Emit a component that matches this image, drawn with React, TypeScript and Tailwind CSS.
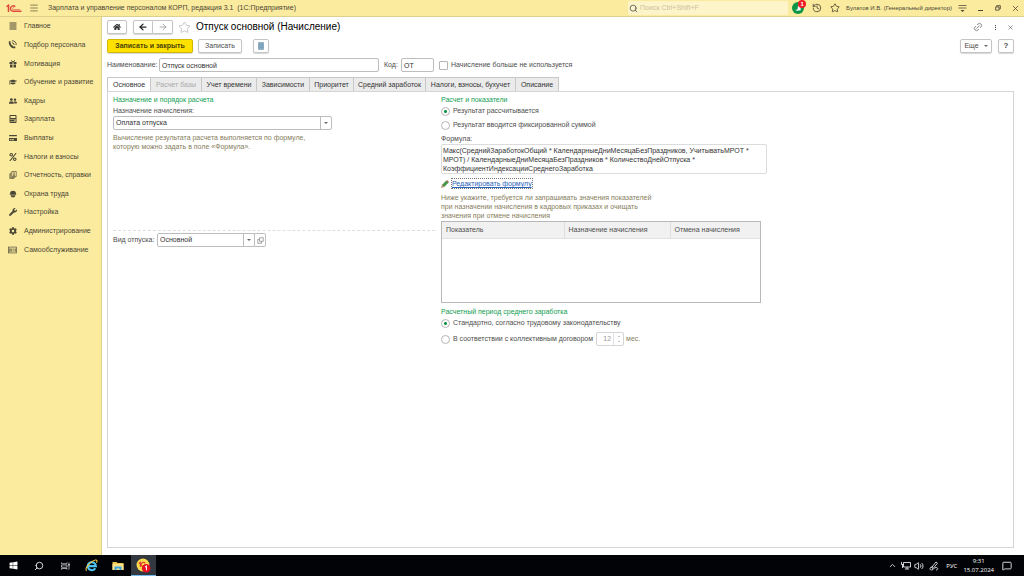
import type { ReactNode } from "react";
import clsx from "clsx";
import {
  FaAlignJustify,
  FaCalculator,
  FaCog,
  FaCreditCard,
  FaGraduationCap,
  FaHome,
  FaPercent,
  FaUserFriends,
  FaWindows,
  FaWrench,
} from "react-icons/fa";
import {
  ArrowLeft,
  ArrowRight,
  ChevronUp,
  History,
  Link2,
  Menu,
  MessageSquare,
  Search,
  Star,
  Volume2,
  X,
} from "lucide-react";

const PhoneIcon = () => (
  <svg viewBox="0 0 16 16" className="size-[9px]" fill="none" stroke="currentColor">
    <path d="M3 2 L3 6 Q5 12 9.5 13 L13 13" strokeWidth="3" />
    <path d="M7 1.5 A6.5 6.5 0 0 1 14.5 9 M7 5 A4 4 0 0 1 11 9" strokeWidth="1.6" />
  </svg>
);

const GiftIcon = () => (
  <svg viewBox="0 0 16 16" className="size-2" fill="currentColor">
    <path d="M1 4 H7 V8 H1 Z M9 4 H15 V8 H9 Z M2 9 H7 V15 H2 Z M9 9 H14 V15 H9 Z" />
    <path d="M8 4 L4 1 M8 4 L12 1" stroke="currentColor" strokeWidth="2" />
  </svg>
);

const PagesIcon = () => (
  <svg viewBox="0 0 16 16" className="size-2" fill="none" stroke="currentColor" strokeWidth="1.3">
    <path d="M5.5 1 H14.5 V11 H5.5 Z M3.5 3 V13 H12.5 M1.5 5 V15 H10.5 M8 4 H12 M8 6.5 H12 M8 9 H12" />
  </svg>
);

const HelmetIcon = () => (
  <svg viewBox="0 0 16 16" className="size-2" fill="currentColor">
    <path d="M2 8 A6 6.5 0 0 1 14 8 L15 9.5 H1 Z" />
    <path d="M3 10.5 H13 L11 14.5 H5 Z" />
  </svg>
);

const BadgeIcon = () => (
  <svg viewBox="0 0 20 16" className="h-2 w-[10px]" fill="none" stroke="currentColor" strokeWidth="1.5">
    <rect x="1" y="1.5" width="18" height="13" />
    <path d="M4 4.5 V12 M7 4.5 V12 M10 6 H13 M10 10 H13 M16 4.5 V12" strokeWidth="2" />
  </svg>
);

const Logo = () => (
  <svg viewBox="0 0 32 18" className="h-[9px] w-4" fill="none" stroke="#e0463c">
    <path d="M1 5.5 L5 2.5 V16" strokeWidth="3" />
    <path d="M18.500 5.500 A5.500 5.500 0 1 0 15 14.500 H31" strokeWidth="2.600" />
    <path d="M16 8 A2 2 0 1 0 15.500 11 H28" strokeWidth="1.200" />
  </svg>
);

const PencilIcon = () => (
  <svg viewBox="0 0 16 16" className="size-2">
    <path d="M3 9.5 L11 1.5 L14.5 5 L6.5 13 Z" fill="#3f9c46" stroke="#2c6b31" />
    <path d="M3 9.5 L6.5 13 L1 15 Z" fill="#e4b77a" stroke="#6e5330" />
    <path d="M11 1.5 L12.5 0.5 L15.5 3.5 L14.5 5 Z" fill="#c9473c" />
  </svg>
);

const OpenIcon = () => (
  <svg viewBox="0 0 14 14" className="size-[7px]" fill="none" stroke="#777" strokeWidth="1.3">
    <path d="M5 1.5 H12.5 V8.5 H5 Z M4.5 5 H1.5 V12.5 H9 V9" />
  </svg>
);

const ExplorerIcon = () => (
  <svg viewBox="0 0 24 24" className="size-[13px]" fill="none">
    <path d="M19 17 A7.500 7.500 0 1 1 20 13 H7" stroke="#4cc3f2" strokeWidth="4" />
    <path d="M3 22 C-2 18 10 4 19 2 C22.500 1.500 23 4 21 7" stroke="#f3c73c" strokeWidth="2" />
  </svg>
);

const FolderIcon = () => (
  <svg viewBox="0 0 24 20" className="h-[10px] w-3">
    <path d="M1 2 H9 L11 4 H23 V18 H1 Z" fill="#f2c94f" />
    <path d="M1 6 H23 V18 H1 Z" fill="#fbe08a" />
    <path d="M5 18 V11 H19 V18 H15 V15 H9 V18 Z" fill="#3aa6dd" />
  </svg>
);

const menu = [
  { name: "Главное", icon: <FaAlignJustify /> },
  { name: "Подбор персонала", icon: <PhoneIcon /> },
  { name: "Мотивация", icon: <GiftIcon /> },
  { name: "Обучение и развитие", icon: <FaGraduationCap /> },
  { name: "Кадры", icon: <FaUserFriends /> },
  { name: "Зарплата", icon: <FaCalculator /> },
  { name: "Выплаты", icon: <FaCreditCard /> },
  { name: "Налоги и взносы", icon: <FaPercent /> },
  { name: "Отчетность, справки", icon: <PagesIcon /> },
  { name: "Охрана труда", icon: <HelmetIcon /> },
  { name: "Настройка", icon: <FaWrench /> },
  { name: "Администрирование", icon: <FaCog /> },
  { name: "Самообслуживание", icon: <BadgeIcon /> },
];

const tabs = [
  { name: "Основное", width: "w-[44px]" },
  { name: "Расчет базы", width: "w-[51px]" },
  { name: "Учет времени", width: "w-[55px]" },
  { name: "Зависимости", width: "w-[53px]" },
  { name: "Приоритет", width: "w-[44px]" },
  { name: "Средний заработок", width: "w-[72px]" },
  { name: "Налоги, взносы, бухучет", width: "w-[90px]" },
  { name: "Описание", width: "w-[43px]" },
];

const Button = ({ className, label, children }: { className?: string; label?: string; children: ReactNode }) => (
  <button
    type="button"
    aria-label={label}
    className={clsx(
      "flex h-[14px] items-center justify-center rounded-xs border shadow-[0_1px_1px_#d8d8d8]",
      className,
    )}
  >
    {children}
  </button>
);

const Caret = () => <span className="border-x-2 border-t-2 border-x-transparent border-t-[#666]" />;

const Dropdown = ({ id, value, className }: { id: string; value: string; className: string }) => (
  <div className={clsx("relative h-[14px]", className)}>
    <select id={id} className="size-full appearance-none rounded-xs border border-[#bdbdbd] bg-white pl-[2px] text-[#333]">
      <option>{value}</option>
    </select>
    <span className="pointer-events-none absolute inset-y-px right-px flex w-[11px] items-center justify-center border-l border-[#bdbdbd]">
      <Caret />
    </span>
  </div>
);

const Radio = ({ name, label, checked }: { name: string; label: string; checked?: boolean }) => (
  <label className="flex items-center gap-[3px]">
    <input
      type="radio"
      name={name}
      defaultChecked={checked}
      className="size-[9px] appearance-none rounded-full border border-[#b5b5b5] bg-white checked:bg-[radial-gradient(circle,#0b9444_1px,transparent_2px)]"
    />
    {label}
  </label>
);

const TitleBar = () => (
  <header className="flex h-[17px] shrink-0 items-center border-b border-[#ddd08a] bg-[#fbeb9e] pr-1 pl-[6px] text-[#4a4635]">
    <Logo />
    <button type="button" aria-label="Меню" className="ml-[7px]">
      <Menu className="size-[10px]" strokeWidth={1.5} />
    </button>
    <span className="ml-[9px] flex-1">Зарплата и управление персоналом КОРП, редакция 3.1&nbsp; (1С:Предприятие)</span>
    <label className="flex h-[14px] w-[160px] items-center gap-[2px] rounded-xs bg-[#fdf4c9] pl-px">
      <Search className="size-[9px] shrink-0 text-[#444]" strokeWidth={2} />
      <input
        aria-label="Поиск"
        placeholder="Поиск Ctrl+Shift+F"
        className="w-full bg-transparent outline-none placeholder:text-[#c9c2a0]"
      />
    </label>
    <button type="button" aria-label="Уведомления" className="relative ml-1 flex size-3 items-center justify-center rounded-full bg-[#0c9547]">
      <svg viewBox="0 0 14 14" className="size-2" fill="#fff">
        <path d="M5 10 C8 9 5 3 9 2 C13 4 11 8 12 11 L5 12 L2 10 Z" />
      </svg>
      <span className="absolute -top-[2px] -right-[2px] flex size-[8px] items-center justify-center rounded-full bg-[#ee1c25] text-[6px] leading-none font-bold text-white">
        1
      </span>
    </button>
    <button type="button" aria-label="История" className="ml-2">
      <History className="size-[10px]" strokeWidth={2} />
    </button>
    <button type="button" aria-label="Избранное" className="ml-2">
      <Star className="size-[10px]" strokeWidth={2} />
    </button>
    <span className="ml-[6px] text-[6px]">Булатов И.В. (Генеральный директор)</span>
    <button type="button" aria-label="Настройки" className="ml-[6px]">
      <svg viewBox="0 0 18 18" className="size-[9px]" fill="none" stroke="currentColor" strokeWidth="1.5">
        <path d="M1 3 H17 M1 8 H17" />
        <path d="M5 12 H13 L9 16 Z" fill="currentColor" strokeWidth="0" />
      </svg>
    </button>
    <button type="button" aria-label="Свернуть" className="ml-2 flex w-[10px] justify-center pt-1">
      <span className="h-px w-[5px] bg-[#4a4635]" />
    </button>
    <button type="button" aria-label="Развернуть" className="ml-2 flex w-[10px] justify-center">
      <svg viewBox="0 0 14 14" className="size-[6px]" fill="none" stroke="currentColor" strokeWidth="2">
        <path d="M4 4 V1.500 H12.500 V9 H10 M1.500 4.500 H9.500 V12 H1.500 Z" />
      </svg>
    </button>
    <button type="button" aria-label="Закрыть" className="ml-2">
      <X className="size-[9px]" strokeWidth={2} />
    </button>
  </header>
);

const Sidebar = () => (
  <nav className="w-[102px] shrink-0 border-r border-[#ddd08a] bg-[#fbeb9e] text-[#4a4635]">
    <ul className="grid h-[242px] auto-rows-fr">
      {menu.map((item) => (
        <li key={item.name} className="flex items-center">
          <a href="#" className="flex items-center gap-[7px] pl-2 whitespace-nowrap">
            <span className="flex w-[9px] justify-center text-[8px]">{item.icon}</span>
            {item.name}
          </a>
        </li>
      ))}
    </ul>
  </nav>
);

const Toolbar = () => (
  <>
    <div className="flex h-5 items-center">
      <Button className="w-5 border-[#c4c4c4] bg-white" label="Начальная страница">
        <FaHome className="size-2 text-[#333]" />
      </Button>
      <div className="ml-[6px] flex">
        <Button className="w-5 rounded-r-none border-[#c4c4c4] bg-white" label="Назад">
          <ArrowLeft className="size-[10px] text-[#222]" strokeWidth={3} />
        </Button>
        <Button className="w-5 rounded-l-none border-l-0 border-[#c4c4c4] bg-white" label="Вперед">
          <ArrowRight className="size-[10px] text-[#999]" strokeWidth={2} />
        </Button>
      </div>
      <Star className="ml-[5px] size-[13px] text-[#bbb]" strokeWidth={1.5} />
      <h1 className="ml-[5px] flex-1 text-[10px] text-black">Отпуск основной (Начисление)</h1>
      <button type="button" aria-label="Ссылка">
        <Link2 className="size-[10px] -rotate-45 text-[#777]" strokeWidth={2} />
      </button>
      <button type="button" aria-label="Действия" className="ml-2 flex w-2 flex-col items-center gap-px">
        <span className="size-px bg-[#444]" />
        <span className="size-px bg-[#444]" />
        <span className="size-px bg-[#444]" />
      </button>
      <button type="button" aria-label="Закрыть форму" className="ml-2">
        <X className="size-[7px] text-[#555]" strokeWidth={2} />
      </button>
    </div>
    <div className="flex h-[18px] items-center">
      <Button className="w-[86px] border-[#d0b800] bg-[#ffe100] font-bold text-[#4a4400]">Записать и закрыть</Button>
      <Button className="ml-[5px] w-[44px] border-[#c4c4c4] bg-white">Записать</Button>
      <Button className="ml-[11px] w-4 border-[#c4c4c4] bg-white" label="Список">
        <svg viewBox="0 0 12 16" className="h-2 w-[6px]" fill="#8fb1c9" stroke="#5f87a5">
          <path d="M1 1 H11 V15 H1 Z M1 4.500 H11 M1 8 H11 M1 11.500 H11" />
        </svg>
      </Button>
      <Button className="ml-auto w-8 gap-[5px] border-[#c4c4c4] bg-white">
        Еще <Caret />
      </Button>
      <Button className="ml-[6px] w-4 border-[#c4c4c4] bg-white text-[8px] font-bold">?</Button>
    </div>
  </>
);

const LeftColumn = () => (
  <div>
    <h2 className="text-[#0f9d4f]">Назначение и порядок расчета</h2>
    <label htmlFor="purpose" className="mt-px block">
      Назначение начисления:
    </label>
    <Dropdown id="purpose" value="Оплата отпуска" className="w-[219px]" />
    <p className="mt-[3px] leading-[9px] text-[#857d5c]">
      Вычисление результата расчета выполняется по формуле,
      <br />
      которую можно задать в поле «Формула».
    </p>
    <div className="mt-[79px] border-t border-dashed border-[#dedede]" />
    <div className="mt-[2px] flex items-center">
      <label htmlFor="kind" className="w-11 whitespace-nowrap">
        Вид отпуска:
      </label>
      <Dropdown id="kind" value="Основной" className="w-[98px]" />
      <button
        type="button"
        aria-label="Открыть"
        className="-ml-px flex h-[14px] w-3 items-center justify-center rounded-r-xs border border-[#bdbdbd]"
      >
        <OpenIcon />
      </button>
    </div>
  </div>
);

const RightColumn = () => (
  <div className="flex flex-col items-start">
    <h2 className="text-[#0f9d4f]">Расчет и показатели</h2>
    <div className="mt-px flex flex-col gap-1">
      <Radio name="result" label="Результат рассчитывается" checked />
      <Radio name="result" label="Результат вводится фиксированной суммой" />
    </div>
    <label htmlFor="formula" className="mt-1">
      Формула:
    </label>
    <textarea
      id="formula"
      readOnly
      rows={3}
      className="h-[30px] w-[326px] resize-none overflow-hidden rounded-xs border border-[#dcdcdc] px-px pt-px leading-[9px] text-[#333]"
      value={
        "Макс(СреднийЗаработокОбщий * КалендарныеДниМесяцаБезПраздников, УчитыватьМРОТ *\nМРОТ) / КалендарныеДниМесяцаБезПраздников * КоличествоДнейОтпуска *\nКоэффициентИндексацииСреднегоЗаработка"
      }
    />
    <div className="mt-1 flex items-center gap-[2px]">
      <PencilIcon />
      <a href="#" className="border border-dotted border-[#777] leading-[9px] text-[#2a62b8] underline">
        Редактировать формулу
      </a>
    </div>
    <p className="mt-1 leading-[9px] text-[#857d5c]">
      Ниже укажите, требуется ли запрашивать значения показателей
      <br />
      при назначении начисления в кадровых приказах и очищать
      <br />
      значения при отмене начисления
    </p>
    <div className="mt-px h-[82px] w-[320px] border border-[#b8b8b8]">
      <table className="w-full table-fixed border-collapse">
        <thead>
          <tr className="h-4 border-b border-[#e2e2e2] bg-[#f1f1f1] text-left">
            <th className="w-[122px] pl-1 font-normal">Показатель</th>
            <th className="w-[106px] border-l border-[#dedede] pl-1 font-normal">Назначение начисления</th>
            <th className="border-l border-[#dedede] pl-1 font-normal">Отмена начисления</th>
          </tr>
        </thead>
        <tbody />
      </table>
    </div>
    <h2 className="mt-1 text-[#0f9d4f]">Расчетный период среднего заработка</h2>
    <div className="mt-px">
      <Radio name="period" label="Стандартно, согласно трудовому законодательству" checked />
    </div>
    <div className="mt-1 flex items-center">
      <Radio name="period" label="В соответствии с коллективным договором" />
      <div className="ml-[3px] flex h-[14px] w-7 rounded-xs border border-[#d5d5d5] text-[#999]">
        <input id="months" defaultValue="12" className="w-4 pr-[2px] text-right" />
        <span className="flex w-[11px] flex-col items-center justify-center gap-1 border-l border-[#e2e2e2]">
          <span className="border-x-1 border-b-1 border-x-transparent border-b-[#888]" />
          <span className="border-x-1 border-t-1 border-x-transparent border-t-[#888]" />
        </span>
      </div>
      <label htmlFor="months" className="ml-[2px] text-[#857d5c]">
        мес.
      </label>
    </div>
  </div>
);

const Taskbar = () => (
  <footer className="flex h-[21px] shrink-0 items-center bg-[#020307] text-white">
    <button type="button" aria-label="Пуск" className="flex w-[26px] justify-center">
      <FaWindows className="size-[9px]" />
    </button>
    <button type="button" aria-label="Поиск" className="flex w-[26px] justify-center">
      <Search className="size-[10px] -scale-x-100" strokeWidth={2} />
    </button>
    <button type="button" aria-label="Представление задач" className="flex w-[26px] justify-center">
      <svg viewBox="0 0 18 16" className="h-2 w-[9px]" fill="none" stroke="#d5d5d5" strokeWidth="1.5">
        <path d="M1 1 V3.500 H12 V1 M1 6 H12 V10.500 H1 Z M1 15.500 V13 H12 V15.500 M16 1 V15" />
        <path d="M16 4 V7" strokeWidth="3" />
      </svg>
    </button>
    <button type="button" aria-label="Internet Explorer" className="flex w-[26px] justify-center">
      <ExplorerIcon />
    </button>
    <button type="button" aria-label="Проводник" className="flex w-[27px] justify-center">
      <FolderIcon />
    </button>
    <button type="button" aria-label="1С:Предприятие" className="flex h-full w-[25px] items-center justify-center border-b border-[#76b9ed] bg-[#333840]">
      <svg viewBox="0 0 28 28" className="size-[15px]">
        <circle cx="13" cy="13" r="12" fill="#fbdc4c" />
        <path d="M5 10 L8 8 V17 M17 10 A4 4 0 1 0 14 16 H22" fill="none" stroke="#d8312a" strokeWidth="2" />
        <circle cx="19" cy="19" r="8" fill="#e81123" />
        <path d="M17 17 L19.500 15 V23" fill="none" stroke="#fff" strokeWidth="2" />
      </svg>
    </button>
    <div className="ml-auto flex items-center font-['Open_Sans',sans-serif] text-[6px]">
      <ChevronUp className="size-[9px]" strokeWidth={2} />
      <svg viewBox="0 0 20 18" className="ml-1 h-[9px] w-[10px]" fill="none" stroke="currentColor" strokeWidth="1.6">
        <path d="M5 3 H19 V12 H5 Z M12 12 V16 M8 16 H16 M1 2 V7 H5 M3 7 V14" />
      </svg>
      <Volume2 className="ml-[3px] size-[10px]" strokeWidth={2} />
      <svg viewBox="0 0 20 20" className="ml-[5px] size-[10px]" fill="none" stroke="currentColor" strokeWidth="1.6">
        <path d="M5 13 L14 2 L17 4.500 L8 15 Z M8 12 C1 11 0 18 5 18 C10 18 9 13 14 13 C19 13 18 18 14 18" />
      </svg>
      <span className="ml-[7px]">РУС</span>
      <time className="ml-[6px] text-center leading-[9px]">
        9:31
        <br />
        15.07.2024
      </time>
      <button type="button" aria-label="Центр уведомлений" className="mr-3 ml-2">
        <MessageSquare className="size-[10px]" strokeWidth={2} />
      </button>
    </div>
  </footer>
);

export default function App() {
  return (
    <div className="flex h-screen flex-col bg-white font-['Liberation_Sans',Arial,sans-serif] text-[7px] leading-[10px] text-[#4d4d4d]">
      <TitleBar />
      <div className="flex min-h-0 flex-1">
        <Sidebar />
        <main className="flex min-w-0 flex-1 flex-col pr-[10px] pb-[7px] pl-[5px]">
          <Toolbar />
          <div className="flex h-5 items-center">
            <label htmlFor="title" className="w-[52px]">
              Наименование:
            </label>
            <input
              id="title"
              defaultValue="Отпуск основной"
              className="h-[14px] w-[220px] rounded-xs border border-[#bdbdbd] px-[2px] text-[#333]"
            />
            <label htmlFor="code" className="ml-[5px] w-[17px]">
              Код:
            </label>
            <input id="code" defaultValue="ОТ" className="h-[14px] w-[33px] rounded-xs border border-[#bdbdbd] px-[2px] text-[#333]" />
            <label className="ml-[5px] flex items-center gap-[3px]">
              <input type="checkbox" className="size-[9px] appearance-none rounded-[1px] border border-[#b5b5b5]" />
              Начисление больше не используется
            </label>
          </div>
          <div role="tablist" className="mt-[2px] flex">
            {tabs.map((tab, i) => (
              <button
                key={tab.name}
                type="button"
                role="tab"
                aria-selected={i === 0}
                className={clsx(
                  "h-[14px] border-t border-r border-[#c8c8c8] text-center whitespace-nowrap",
                  tab.width,
                  i === 0 ? "border-l bg-white" : "bg-[#ebebeb]",
                  i === 1 ? "text-[#aaa]" : "text-[#333]",
                )}
              >
                {tab.name}
              </button>
            ))}
          </div>
          <section className="grid flex-1 grid-cols-[322px_1fr] content-start gap-[6px] border border-[#d5d5d5] px-[5px] pt-[3px]">
            <LeftColumn />
            <RightColumn />
          </section>
        </main>
      </div>
      <Taskbar />
    </div>
  );
}
